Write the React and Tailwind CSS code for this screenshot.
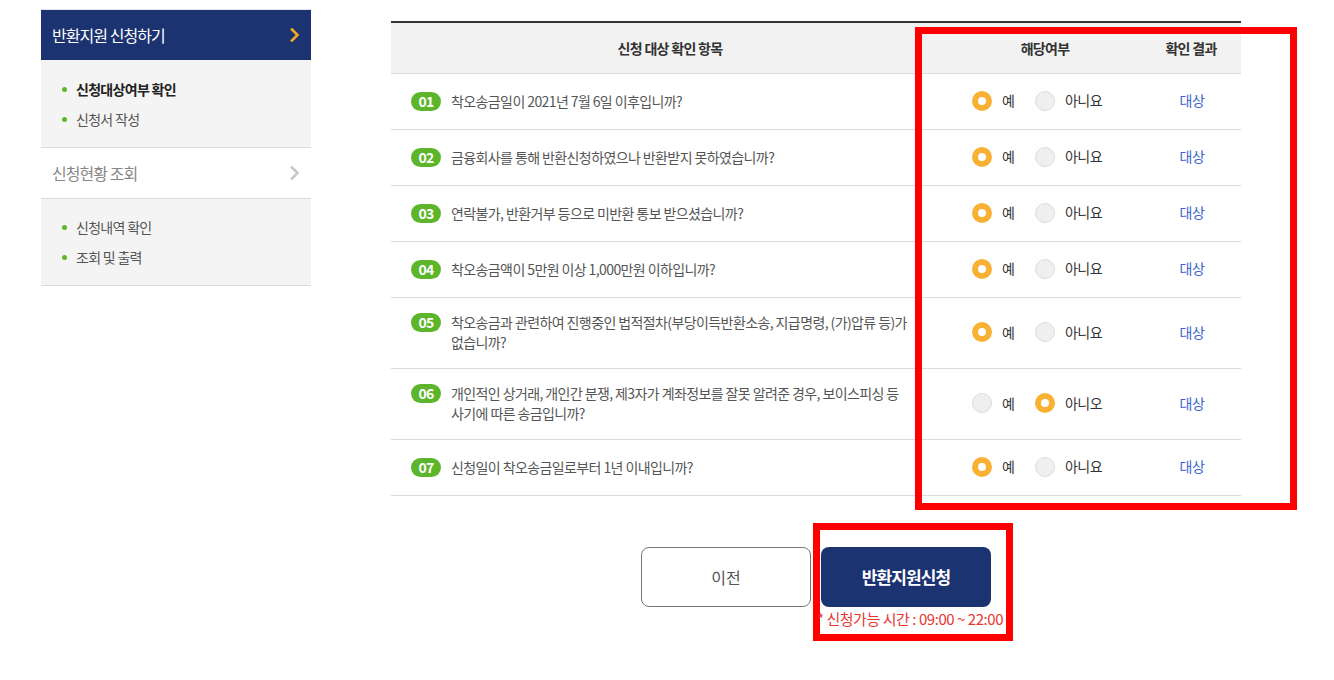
import React from "react";

const rows = [
  { no: "01", lines: ["착오송금일이 2021년 7월 6일 이후입니까?"], yes: true },
  { no: "02", lines: ["금융회사를 통해 반환신청하였으나 반환받지 못하였습니까?"], yes: true },
  { no: "03", lines: ["연락불가, 반환거부 등으로 미반환 통보 받으셨습니까?"], yes: true },
  { no: "04", lines: ["착오송금액이 5만원 이상 1,000만원 이하입니까?"], yes: true },
  {
    no: "05",
    lines: ["착오송금과 관련하여 진행중인 법적절차(부당이득반환소송, 지급명령, (가)압류 등)가", "없습니까?"],
    yes: true,
  },
  {
    no: "06",
    lines: ["개인적인 상거래, 개인간 분쟁, 제3자가 계좌정보를 잘못 알려준 경우, 보이스피싱 등", "사기에 따른 송금입니까?"],
    yes: false,
    noLabel: "아니오",
  },
  { no: "07", lines: ["신청일이 착오송금일로부터 1년 이내입니까?"], yes: true },
];

function Radio({ checked, className = "" }) {
  return checked ? (
    <span className={"w-[20px] h-[20px] rounded-full bg-[#f8b133] flex items-center justify-center shrink-0 " + className}>
      <span className="w-[8px] h-[8px] rounded-full bg-white" />
    </span>
  ) : (
    <span className={"block w-[20px] h-[20px] rounded-full bg-[#efefef] border border-[#dcdcdc] shrink-0 " + className} />
  );
}

function Chevron({ color }) {
  return (
    <svg width="10" height="14" viewBox="0 0 10 14" fill="none">
      <path d="M2 1.5 L7.5 7 L2 12.5" stroke={color} strokeWidth="2.6" strokeLinecap="square" />
    </svg>
  );
}

function SubItem({ children, bold }) {
  return (
    <div className="h-[30px] flex items-center pl-[21px]">
      <span className="w-[5px] h-[5px] rounded-full bg-[#5cb82a] mr-[9px]" />
      <span
        className={
          "text-[14px] tracking-[-0.05em] " + (bold ? "font-bold text-[#222]" : "text-[#555]")
        }
      >
        {children}
      </span>
    </div>
  );
}

export default function App() {
  return (
    <div
      className="relative w-[1334px] h-[680px] bg-white overflow-hidden"
      style={{ fontFamily: '"Noto Sans CJK KR", "Noto Sans", sans-serif' }}
    >
      <div className="flex pl-[41px] pt-[9px]">
        {/* Sidebar */}
        <div className="w-[270px] shrink-0 border-t border-[#e5e5e5]">
          <div className="h-[50px] bg-[#1b3370] flex items-center justify-between pl-[11px] pr-[11px]">
            <span className="text-white text-[16px] tracking-[-0.06em]">반환지원 신청하기</span>
            <Chevron color="#f6a823" />
          </div>
          <div className="bg-[#f4f4f4] pt-[14px] pb-[13px] border-b border-[#dcdcdc]">
            <SubItem bold>신청대상여부 확인</SubItem>
            <SubItem>신청서 작성</SubItem>
          </div>
          <div className="h-[51px] flex items-center justify-between pl-[11px] pr-[11px] border-b border-[#dcdcdc]">
            <span className="text-[#888] text-[16px] tracking-[-0.06em]">신청현황 조회</span>
            <Chevron color="#c8c8c8" />
          </div>
          <div className="bg-[#f4f4f4] py-[13px] border-b border-[#dcdcdc]">
            <SubItem>신청내역 확인</SubItem>
            <SubItem>조회 및 출력</SubItem>
          </div>
        </div>

        {/* Main */}
        <div className="ml-[80px] mt-[12px] w-[850px] shrink-0">
          <div className="border-t-2 border-[#333]">
            <div className="h-[51px] bg-[#f2f2f2] flex items-center border-b border-[#dcdcdc] text-[14px] font-bold text-[#333] tracking-[-0.05em]">
              <div className="w-[558px] text-center">신청 대상 확인 항목</div>
              <div className="w-[194px] text-center pr-[2px]">해당여부</div>
              <div className="w-[98px] text-center pr-[2px]">확인 결과</div>
            </div>
            {rows.map((r) => (
              <div
                key={r.no}
                className={
                  "flex items-center border-b border-[#dcdcdc] pb-[2px] " +
                  (r.lines.length > 1 ? "h-[71px]" : "h-[56px]")
                }
              >
                <div className="w-[558px] flex items-start pl-[20px]">
                  <span className="w-[30px] h-[19px] rounded-full bg-[#5cb52b] text-white text-[14px] font-bold leading-[19px] text-center tracking-[-0.06em] mt-[1px] shrink-0">
                    {r.no}
                  </span>
                  <div className="ml-[10px] text-[14px] leading-[20px] text-[#555] tracking-[-0.6px]">
                    {r.lines.map((l, i) => (
                      <div key={i} className="whitespace-nowrap">
                        {l}
                      </div>
                    ))}
                  </div>
                </div>
                <div className="w-[194px] flex items-center pl-[23px] text-[14px] text-[#333]">
                  <Radio checked={r.yes} />
                  <span className="ml-[10px]">예</span>
                  <Radio checked={!r.yes} className="ml-[20px]" />
                  <span className="ml-[10px] tracking-[-0.03em]">{r.noLabel || "아니요"}</span>
                </div>
                <div className="w-[98px] text-center text-[14px] text-[#3b63d3] tracking-[-0.03em]">
                  대상
                </div>
              </div>
            ))}
          </div>

          <div className="mt-[51px] flex justify-center gap-[10px]">
            <button className="w-[170px] h-[60px] rounded-[8px] border border-[#777] bg-white text-[16px] text-[#555]">
              이전
            </button>
            <div className="w-[170px] flex flex-col items-center">
              <button className="w-[170px] h-[60px] rounded-[8px] bg-[#1b3370] text-white text-[17px] font-bold tracking-[-0.05em]">
                반환지원신청
              </button>
              <span className="relative z-10 mt-[1px] ml-[8px] whitespace-nowrap text-[15px] text-[#e8362f] tracking-[-0.03em] leading-[22px]">
                * 신청가능 시간 : 09:00 ~ 22:00
              </span>
            </div>
          </div>
        </div>
      </div>

      {/* Red annotation boxes */}
      <div className="absolute left-[915px] top-[27px] w-[382px] h-[483px] border-[7px] border-[#ff0000] pointer-events-none" />
      <div className="absolute left-[813px] top-[523px] w-[200px] h-[118px] border-[7px] border-[#ff0000] pointer-events-none" />
    </div>
  );
}
